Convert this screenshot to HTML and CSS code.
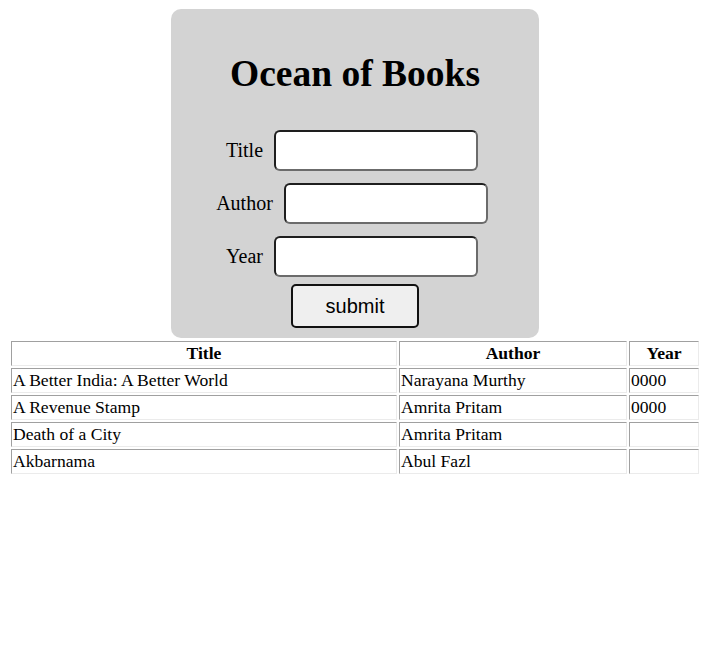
FILE: index.html
```html
<!DOCTYPE html>
<html>
<head>
<meta charset="utf-8">
<title>Ocean of Books</title>
<link rel="stylesheet" href="styles.css">
</head>
<body>
<div class="box">
  <h1 class="heading">Ocean of Books</h1>
  <form class="form">
    <div class="row"><label class="lbl">Title</label><input class="field" type="text"></div>
    <div class="row"><label class="lbl">Author</label><input class="field" type="text"></div>
    <div class="row"><label class="lbl">Year</label><input class="field" type="text"></div>
    <div class="actions"><button class="btn" type="button">submit</button></div>
  </form>
</div>
<table class="books">
  <colgroup><col class="c-title"><col class="c-author"><col class="c-year"></colgroup>
  <thead>
    <tr><th class="cell">Title</th><th class="cell">Author</th><th class="cell">Year</th></tr>
  </thead>
  <tbody>
    <tr><td class="cell">A Better India: A Better World</td><td class="cell">Narayana Murthy</td><td class="cell">0000</td></tr>
    <tr><td class="cell">A Revenue Stamp</td><td class="cell">Amrita Pritam</td><td class="cell">0000</td></tr>
    <tr><td class="cell">Death of a City</td><td class="cell">Amrita Pritam</td><td class="cell"></td></tr>
    <tr><td class="cell">Akbarnama</td><td class="cell">Abul Fazl</td><td class="cell"></td></tr>
  </tbody>
</table>
</body>
</html>
```

FILE: styles.css
```css
html, body {
  background: #ffffff;
}
body {
  margin: 8px;
  font-family: "Liberation Serif", "Times New Roman", serif;
  font-size: 16px;
  color: #000;
}
.box {
  width: 368px;
  box-sizing: border-box;
  margin: 1px auto 0;
  background: #d3d3d3;
  border-radius: 10px;
  padding: 44px 0 10px;
}
.heading {
  margin: 0 0 35px;
  font-size: 37.5px;
  line-height: 42px;
  font-weight: bold;
  text-align: center;
}
.form {
  display: flex;
  flex-direction: column;
  gap: 12px;
  margin: 0;
}
.row {
  display: flex;
  justify-content: center;
  align-items: center;
  padding-right: 6px;
}
.lbl {
  font-size: 20px;
  line-height: 23px;
}
.field {
  margin: 0 0 0 11px;
  width: 204px;
  height: 41px;
  box-sizing: border-box;
  border: 2px solid #1e1e1e;
  border-right-color: #6b6b6b;
  border-bottom-color: #6b6b6b;
  border-radius: 6px;
  background: #fff;
  padding: 0 4px;
  font-size: 16px;
}
.actions {
  display: flex;
  justify-content: center;
  margin-top: -5px;
}
.btn {
  width: 128px;
  height: 44px;
  box-sizing: border-box;
  border: 2px solid #111;
  border-radius: 5px;
  background: #efefef;
  font-family: "Liberation Sans", Arial, sans-serif;
  font-size: 20px;
  color: #000;
  padding: 0;
}
.books {
  width: 100%;
  table-layout: fixed;
  border-collapse: separate;
  border-spacing: 2px;
  border: 1px solid transparent;
  margin-top: 0;
}
.c-title { width: 386px; }
.c-author { width: 228px; }
.cell {
  border: 1px solid #a0a0a0;
  border-right-color: #ebebeb;
  border-bottom-color: #ebebeb;
  padding: 1px;
  line-height: 21px;
  font-size: 17.6px;
  text-align: left;
  white-space: nowrap;
  overflow: hidden;
}
th.cell {
  text-align: center;
  font-weight: bold;
}
```
